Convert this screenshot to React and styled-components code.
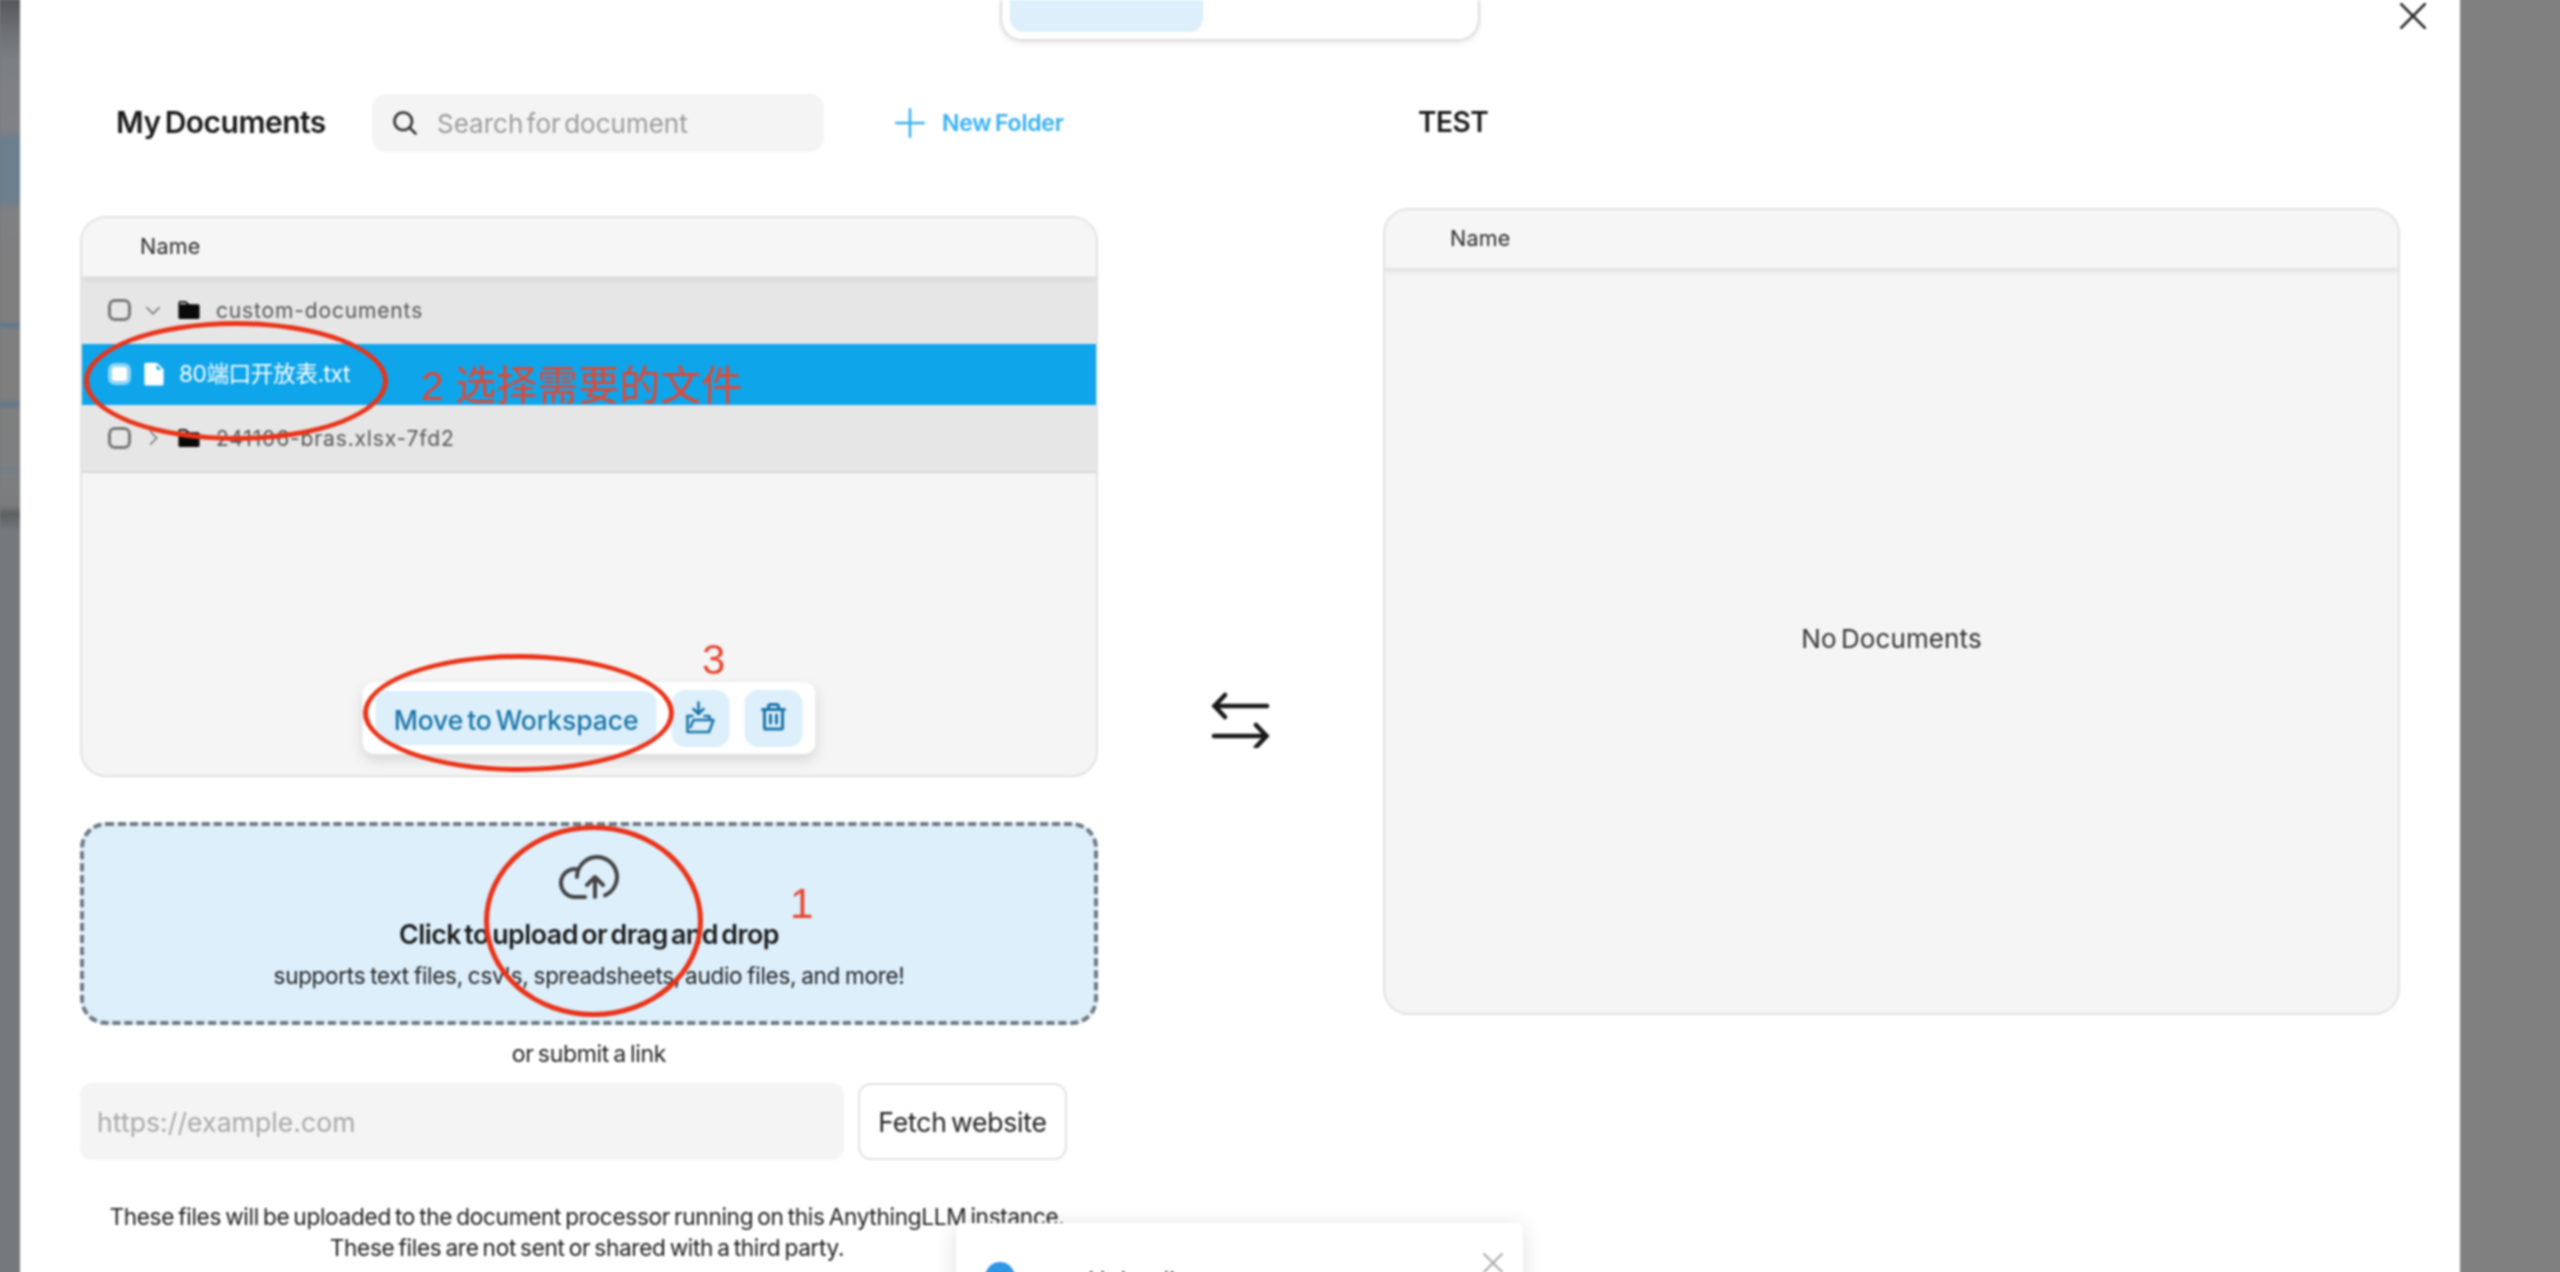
import React from "react";
import styled, { createGlobalStyle } from "styled-components";
import { PiMagnifyingGlassBold, PiPlus, PiCaretDown, PiCaretRight, PiFolderFill, PiFileFill, PiTrashBold, PiCloudArrowUp, PiX } from "react-icons/pi";

const Global = createGlobalStyle`
  html, body { margin: 0; padding: 0; background: #808080; overflow: hidden; }
  * { box-sizing: border-box; }
  body { font-family: Inter, "Noto Sans CJK SC", "Liberation Sans", sans-serif; }
`;

const Page = styled.div`
  width: 2568px; height: 1280px; margin: -4px 0 0 -4px; padding: 4px; display: flex; overflow: hidden; filter: blur(0.9px);
  background: linear-gradient(90deg, #77797b 0, #77797b 24px, #fff 24px, #fff 2464px, #808080 2464px);
`;
const BackdropLeft = styled.div`
  width: 20px; flex: none;
  background: linear-gradient(180deg, #56585a 0, #6f7274 34px, #7d8082 60px, #808184 130px, #6b7f8e 140px, #6b7f8e 200px, #7f8082 210px, #7f7f7f 320px, #60778b 325px, #7f7f7f 331px, #7f7f7f 399px, #60778b 404px, #7f7f7f 410px, #7d7f81 465px, #6f7f8c 469px, #7d7f81 474px, #7a7c7e 505px, #5e6062 514px, #76797c 530px, #76797c 1272px);
`;
const BackdropRight = styled.div`width: 100px; flex: none; background: #808080;`;
const Modal = styled.div`
  position: relative; flex: 1; background: #fff; display: flex; flex-direction: column; padding: 0 60px 0 60px;
`;
const TabBarRow = styled.div`display: flex; justify-content: center; height: 41px; flex: none;`;
const TabBar = styled.div`
  width: 480px; height: 41px; background: #fff; border: 2px solid #dedede; border-top: 0;
  border-radius: 0 0 22px 22px; padding: 0 0 7px 8px; box-shadow: 0 3px 5px rgba(0,0,0,.08);
`;
const ActiveTab = styled.div`width: 193px; height: 32px; background: #dceffb; border-radius: 0 0 14px 14px;`;
const CloseButton = styled.div`
  position: absolute; top: -5px; right: 26px; color: #222; font-size: 42px; display: flex;
`;
const Columns = styled.div`
  display: grid; grid-template-columns: 1018px 285px 1017px; margin-top: 53px;
`;
const Column = styled.div`display: flex; flex-direction: column;`;
const HeaderRow = styled.div`
  height: 58px; display: flex; align-items: center; padding-left: 36px; flex: none;
`;
const Title = styled.h2`
  margin: -2px 0 0; width: 211px; flex: none; font-size: 30px; font-weight: 600; color: #1a1a1a; letter-spacing: -0.5px; word-spacing: -3px; white-space: nowrap;
`;
const SearchBox = styled.div`
  width: 452px; height: 58px; margin-left: 45px; background: #f4f4f4; border-radius: 14px; flex: none;
  display: flex; align-items: center; padding-left: 19px; gap: 18px; color: #333; font-size: 28px;
`;
const SearchText = styled.span`
  color: #9b9b9b; font-size: 26px; letter-spacing: 0; word-spacing: -4px; white-space: nowrap;
`;
const NewFolder = styled.div`
  margin-left: 66px; display: flex; align-items: center; gap: 12px; color: #38b0f0; font-size: 40px;
`;
const NewFolderText = styled.span`
  font-size: 23px; font-weight: 600; letter-spacing: -0.2px; word-spacing: -2px; white-space: nowrap;
`;
const Table = styled.div`
  position: relative; background: #f5f5f5; border: 2px solid #e2e2e2; border-radius: 26px;
  margin-top: ${p => p.$gap}px; height: ${p => p.$h}px; display: flex; flex-direction: column; overflow: hidden;
`;
const TableHead = styled.div`
  height: 60px; flex: none; display: flex; align-items: center; padding: 0 0 2px ${p => p.$pad}px;
  font-size: 21.5px; color: #2a2a2a; letter-spacing: .25px; background: #f6f6f6;
  border-bottom: 2px solid #e2e2e2; box-shadow: 0 2px 6px rgba(0,0,0,.08); position: relative; z-index: 1;
`;
const Row = styled.div`
  height: ${p => p.$h}px; flex: none; display: flex; align-items: center; padding: 0 0 ${p => p.$last ? 0 : 2}px 26px;
  background: ${p => p.$selected ? "#0ea5ea" : "#e6e6e6"};
  color: ${p => p.$selected ? "#fff" : "#555"};
  border-bottom: ${p => p.$last ? "2px solid #d6d6d6" : "0"};
`;
const Check = styled.span`
  width: 23px; height: 22px; flex: none; border-radius: 7px;
  border: ${p => p.$selected ? "4px solid #8fd4f7" : "3px solid #777"};
  background: ${p => p.$selected ? "#fff" : "transparent"};
`;
const Caret = styled.span`
  width: 20px; margin-left: 12px; display: flex; justify-content: center; font-size: 24px; color: #666; flex: none;
`;
const FolderGlyph = styled.span`
  margin-left: 13px; width: 26px; display: flex; justify-content: center; font-size: 28px; color: #0a0a0a; flex: none;
`;
const FileGlyph = styled.span`
  margin-left: 9px; display: flex; font-size: 28px; color: #fff; flex: none;
`;
const RowName = styled.span`
  margin-left: ${p => p.$ml}px; font-size: 21px; letter-spacing: .85px; white-space: nowrap;
`;
const FileName = styled.span`
  margin-left: 11px; font-size: 22.6px; letter-spacing: -0.4px; white-space: nowrap; margin-top: -2px;
`;
const ActionBar = styled.div`
  position: absolute; left: 50%; bottom: 21px; transform: translateX(-50%); width: 453px; height: 72px;
  background: #fff; border-radius: 12px; box-shadow: 0 6px 14px rgba(0,0,0,.12);
  display: flex; align-items: center; padding-left: 13px;
`;
const MoveButton = styled.div`
  width: 281px; height: 54px; background: #dceffb; border-radius: 12px; color: #1b75a8; padding-top: 3px;
  font-size: 26.5px; font-weight: 500; display: flex; align-items: center; justify-content: center;
  letter-spacing: -0.1px; word-spacing: -3px; white-space: nowrap;
`;
const IconButton = styled.div`
  width: 58px; height: 57px; margin-left: ${p => p.$ml}px; background: #dceffb; border-radius: 14px;
  color: #1b75a8; display: flex; align-items: center; justify-content: center; font-size: 32px;
`;
const UploadBox = styled.div`
  margin-top: 45px; height: 203px; background: #dceffb; border: 4px dashed #6f7a82; border-radius: 26px;
  display: flex; flex-direction: column; align-items: center; padding-top: 25px;
`;
const CloudIcon = styled.div`display: flex; font-size: 64px; color: #444; height: 52px; align-items: center;`;
const UploadTitle = styled.div`
  margin-top: 15px; font-size: 26.8px; font-weight: 600; color: #1c1c1c; letter-spacing: -0.5px; word-spacing: -3px; white-space: nowrap;
`;
const UploadSub = styled.div`
  margin-top: 12px; font-size: 22.5px; color: #222; letter-spacing: -0.3px; word-spacing: -1px; white-space: nowrap;
`;
const LinkLabel = styled.div`
  margin-top: 15px; height: 29px; text-align: center; font-size: 23px; color: #222; letter-spacing: -0.3px; word-spacing: -2px;
`;
const LinkRow = styled.div`display: flex; gap: 14px; margin-top: 14px; padding-right: 31px;`;
const LinkInput = styled.div`
  flex: 1; height: 77px; background: #f4f4f4; border-radius: 12px; display: flex; align-items: center;
  padding-left: 17px; color: #a8a8a8; font-size: 26.5px; letter-spacing: .1px;
`;
const FetchButton = styled.div`
  width: 209px; height: 77px; background: #fff; border: 2px solid #e2e2e2; border-radius: 13px;
  display: flex; align-items: center; justify-content: center; font-size: 26.5px; color: #222; word-spacing: -3px; letter-spacing: -0.2px; white-space: nowrap;
`;
const Footnote = styled.div`
  margin-top: 41px; padding-right: 4px; text-align: center; font-size: 22.6px; line-height: 31px; color: #1c1c1c; letter-spacing: -0.3px; word-spacing: -2px; white-space: nowrap;
`;
const SwapColumn = styled.div`display: flex; justify-content: center; padding: 594px 2px 0 0;`;
const RightHeader = styled(HeaderRow)`padding-left: 35px;`;
const TestTitle = styled.h2`margin: -2px 0 0; font-size: 28px; font-weight: 600; color: #1a1a1a; letter-spacing: -0.5px;`;
const EmptyBody = styled.div`
  flex: 1; display: flex; align-items: center; justify-content: center; font-size: 26px; color: #333;
  letter-spacing: .1px; word-spacing: -3px; padding-bottom: 6px;
`;
const Ellipse = styled.div`
  position: absolute; left: ${p => p.$x}px; top: ${p => p.$y}px; width: ${p => p.$w}px; height: ${p => p.$h}px;
  border: 5px solid #ea3318; border-radius: 50%; z-index: 5; pointer-events: none;
`;
const Note = styled.div`
  position: absolute; left: ${p => p.$x}px; top: ${p => p.$y}px; color: #e8452f; font-size: ${p => p.$size}px; line-height: 1;
  font-family: "Liberation Sans", "Noto Sans CJK SC", sans-serif; font-weight: 400; z-index: 5; white-space: nowrap;
`;
const Toast = styled.div`
  position: absolute; left: 936px; top: 1223px; width: 567px; height: 120px; background: #fff; border-radius: 6px;
  box-shadow: 0 2px 22px rgba(0,0,0,.12); padding: 39px 0 0 29px; display: flex; gap: 73px; z-index: 4;
`;
const ToastDot = styled.span`width: 30px; height: 30px; border-radius: 50%; background: #2e97e6; flex: none;`;
const ToastText = styled.span`font-size: 24px; color: #444; margin-top: 4px; white-space: nowrap;`;
const ToastClose = styled.span`position: absolute; right: 14px; top: 24px; color: #aaa; font-size: 32px; display: flex;`;

const MoveIcon = () => (
  <svg width="32" height="34" viewBox="0 0 32 34" fill="none" stroke="currentColor" strokeWidth="2.6" strokeLinecap="round" strokeLinejoin="round">
    <path d="M14 1.5v11M9 8l5 5 5-5" />
    <path d="M3 15v16h21.5L29 19H9l-3 7" />
    <path d="M3 15h5M20 15h5v3" />
  </svg>
);
const SwapIcon = () => (
  <svg width="60" height="60" viewBox="0 0 60 60" fill="none" stroke="#1a1a1a" strokeWidth="4.6" strokeLinejoin="miter" strokeLinecap="round">
    <path d="M5 18h52M15 7 4.5 18 15 29" />
    <path d="M4 48h52M46 37l10.5 11L46 59" />
  </svg>
);

export default function App() {
  return (
    <>
      <Global />
      <Page>
        <BackdropLeft />
        <Modal>
          <TabBarRow><TabBar><ActiveTab /></TabBar></TabBarRow>
          <CloseButton><PiX /></CloseButton>
          <Columns>
            <Column>
              <HeaderRow>
                <Title>My Documents</Title>
                <SearchBox><PiMagnifyingGlassBold /><SearchText>Search for document</SearchText></SearchBox>
                <NewFolder><PiPlus /><NewFolderText>New Folder</NewFolderText></NewFolder>
              </HeaderRow>
              <Table $gap={64} $h={561}>
                <TableHead $pad={58}>Name</TableHead>
                <Row $h={66}>
                  <Check /><Caret><PiCaretDown /></Caret><FolderGlyph><PiFolderFill /></FolderGlyph>
                  <RowName $ml={14}>custom-documents</RowName>
                </Row>
                <Row $h={61} $selected>
                  <Check $selected /><FileGlyph><PiFileFill /></FileGlyph>
                  <FileName>80端口开放表.txt</FileName>
                </Row>
                <Row $h={68} $last>
                  <Check /><Caret><PiCaretRight /></Caret><FolderGlyph><PiFolderFill /></FolderGlyph>
                  <RowName $ml={14}>241106-bras.xlsx-7fd2</RowName>
                </Row>
                <ActionBar>
                  <MoveButton>Move to Workspace</MoveButton>
                  <IconButton $ml={15}><MoveIcon /></IconButton>
                  <IconButton $ml={15}><PiTrashBold /></IconButton>
                </ActionBar>
              </Table>
              <UploadBox>
                <CloudIcon><PiCloudArrowUp /></CloudIcon>
                <UploadTitle>Click to upload or drag and drop</UploadTitle>
                <UploadSub>supports text files, csv's, spreadsheets, audio files, and more!</UploadSub>
              </UploadBox>
              <LinkLabel>or submit a link</LinkLabel>
              <LinkRow>
                <LinkInput>https://example.com</LinkInput>
                <FetchButton>Fetch website</FetchButton>
              </LinkRow>
              <Footnote>
                These files will be uploaded to the document processor running on this AnythingLLM instance.<br />
                These files are not sent or shared with a third party.
              </Footnote>
            </Column>
            <SwapColumn><SwapIcon /></SwapColumn>
            <Column>
              <RightHeader><TestTitle>TEST</TestTitle></RightHeader>
              <Table $gap={56} $h={807}>
                <TableHead $pad={65}>Name</TableHead>
                <EmptyBody>No Documents</EmptyBody>
              </Table>
            </Column>
          </Columns>
          <Ellipse $x={64} $y={321} $w={304} $h={120} />
          <Ellipse $x={343} $y={654} $w={311} $h={118} />
          <Ellipse $x={464} $y={825} $w={219} $h={192} />
          <Note $x={401} $y={366} $size={41}>2 选择需要的文件</Note>
          <Note $x={682} $y={639} $size={42}>3</Note>
          <Note $x={770} $y={883} $size={42}>1</Note>
          <Toast>
            <ToastDot /><ToastText>Uploading</ToastText>
            <ToastClose><PiX /></ToastClose>
          </Toast>
        </Modal>
        <BackdropRight />
      </Page>
    </>
  );
}
